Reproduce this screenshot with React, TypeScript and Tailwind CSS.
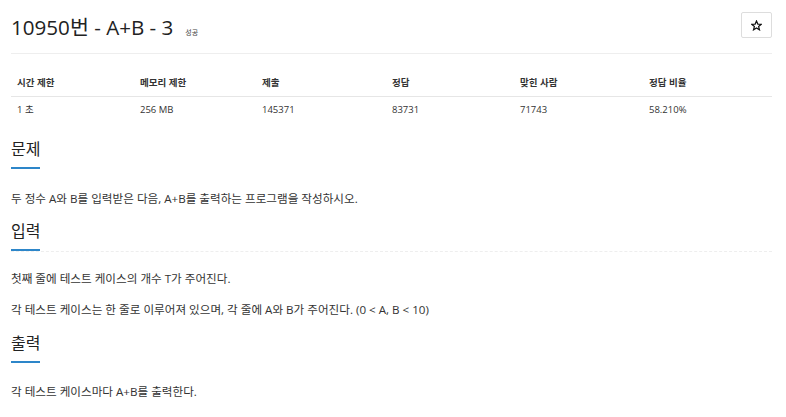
const FONT = "font-['Open_Sans','Noto_Sans_CJK_KR',sans-serif]";

const STATS = [
  { label: "시간 제한", value: "1 초" },
  { label: "메모리 제한", value: "256 MB" },
  { label: "제출", value: "145371" },
  { label: "정답", value: "83731" },
  { label: "맞힌 사람", value: "71743" },
  { label: "정답 비율", value: "58.210%" },
];

function Headline({ title, dotted }: { title: string; dotted?: boolean }) {
  return (
    <div className={dotted ? "border-b border-dashed border-[#eeeeee]" : ""}>
      <h2 className="inline-block text-[16px] leading-[20px] text-[#222] font-normal">
        {title}
        <span className="block mt-[8px] h-[2px] bg-[#2d86c9]" />
      </h2>
    </div>
  );
}

export default function App() {
  return (
    <div className={`${FONT} bg-white w-[786px] h-[417px] pl-[11px] pr-[14px] pt-[12px] text-[#333] overflow-hidden`}>
      {/* title */}
      <div className="flex items-start justify-between">
        <div className="flex items-baseline">
          <h1 className="text-[20.6px] leading-[30px] text-[#222] font-normal">10950번 - A+B - 3</h1>
          <span className="ml-[12px] text-[7px] text-[#444]">성공</span>
        </div>
        <button className="w-[31px] h-[26px] border border-[#dddddd] rounded-[2px] flex items-center justify-center">
          <svg width="11" height="11" viewBox="0 0 24 24" fill="none" stroke="#111" strokeWidth="2.6" strokeLinejoin="miter">
            <polygon points="12,2 14.9,8.9 22.5,9.3 16.6,14.1 18.5,21.5 12,17.4 5.5,21.5 7.4,14.1 1.5,9.3 9.1,8.9" />
          </svg>
        </button>
      </div>
      <div className="mt-[11px] border-t border-[#eeeeee]" />

      {/* stats */}
      <div className="mt-[16px] grid grid-cols-[123px_122px_130px_128px_129px_129px] text-[9.5px]">
        {STATS.map((s) => (
          <div key={s.label} className="px-[6px] py-[7px] leading-[12px] font-bold border-b border-[#e6e6e6]">
            {s.label}
          </div>
        ))}
        {STATS.map((s) => (
          <div key={s.label + "v"} className="px-[6px] py-[7px] leading-[12px]">
            {s.value}
          </div>
        ))}
      </div>

      {/* 문제 */}
      <div className="mt-[14px]">
        <Headline title="문제" />
        <p className="mt-[21px] text-[11.6px] leading-[18px]">두 정수 A와 B를 입력받은 다음, A+B를 출력하는 프로그램을 작성하시오.</p>
      </div>

      {/* 입력 */}
      <div className="mt-[11px]">
        <Headline title="입력" dotted />
        <p className="mt-[18px] text-[11.6px] leading-[18px]">첫째 줄에 테스트 케이스의 개수 T가 주어진다.</p>
        <p className="mt-[13px] text-[11.6px] leading-[18px]">각 테스트 케이스는 한 줄로 이루어져 있으며, 각 줄에 A와 B가 주어진다. (0 &lt; A, B &lt; 10)</p>
      </div>

      {/* 출력 */}
      <div className="mt-[12px]">
        <Headline title="출력" />
        <p className="mt-[20px] text-[11.6px] leading-[18px]">각 테스트 케이스마다 A+B를 출력한다.</p>
      </div>
    </div>
  );
}
